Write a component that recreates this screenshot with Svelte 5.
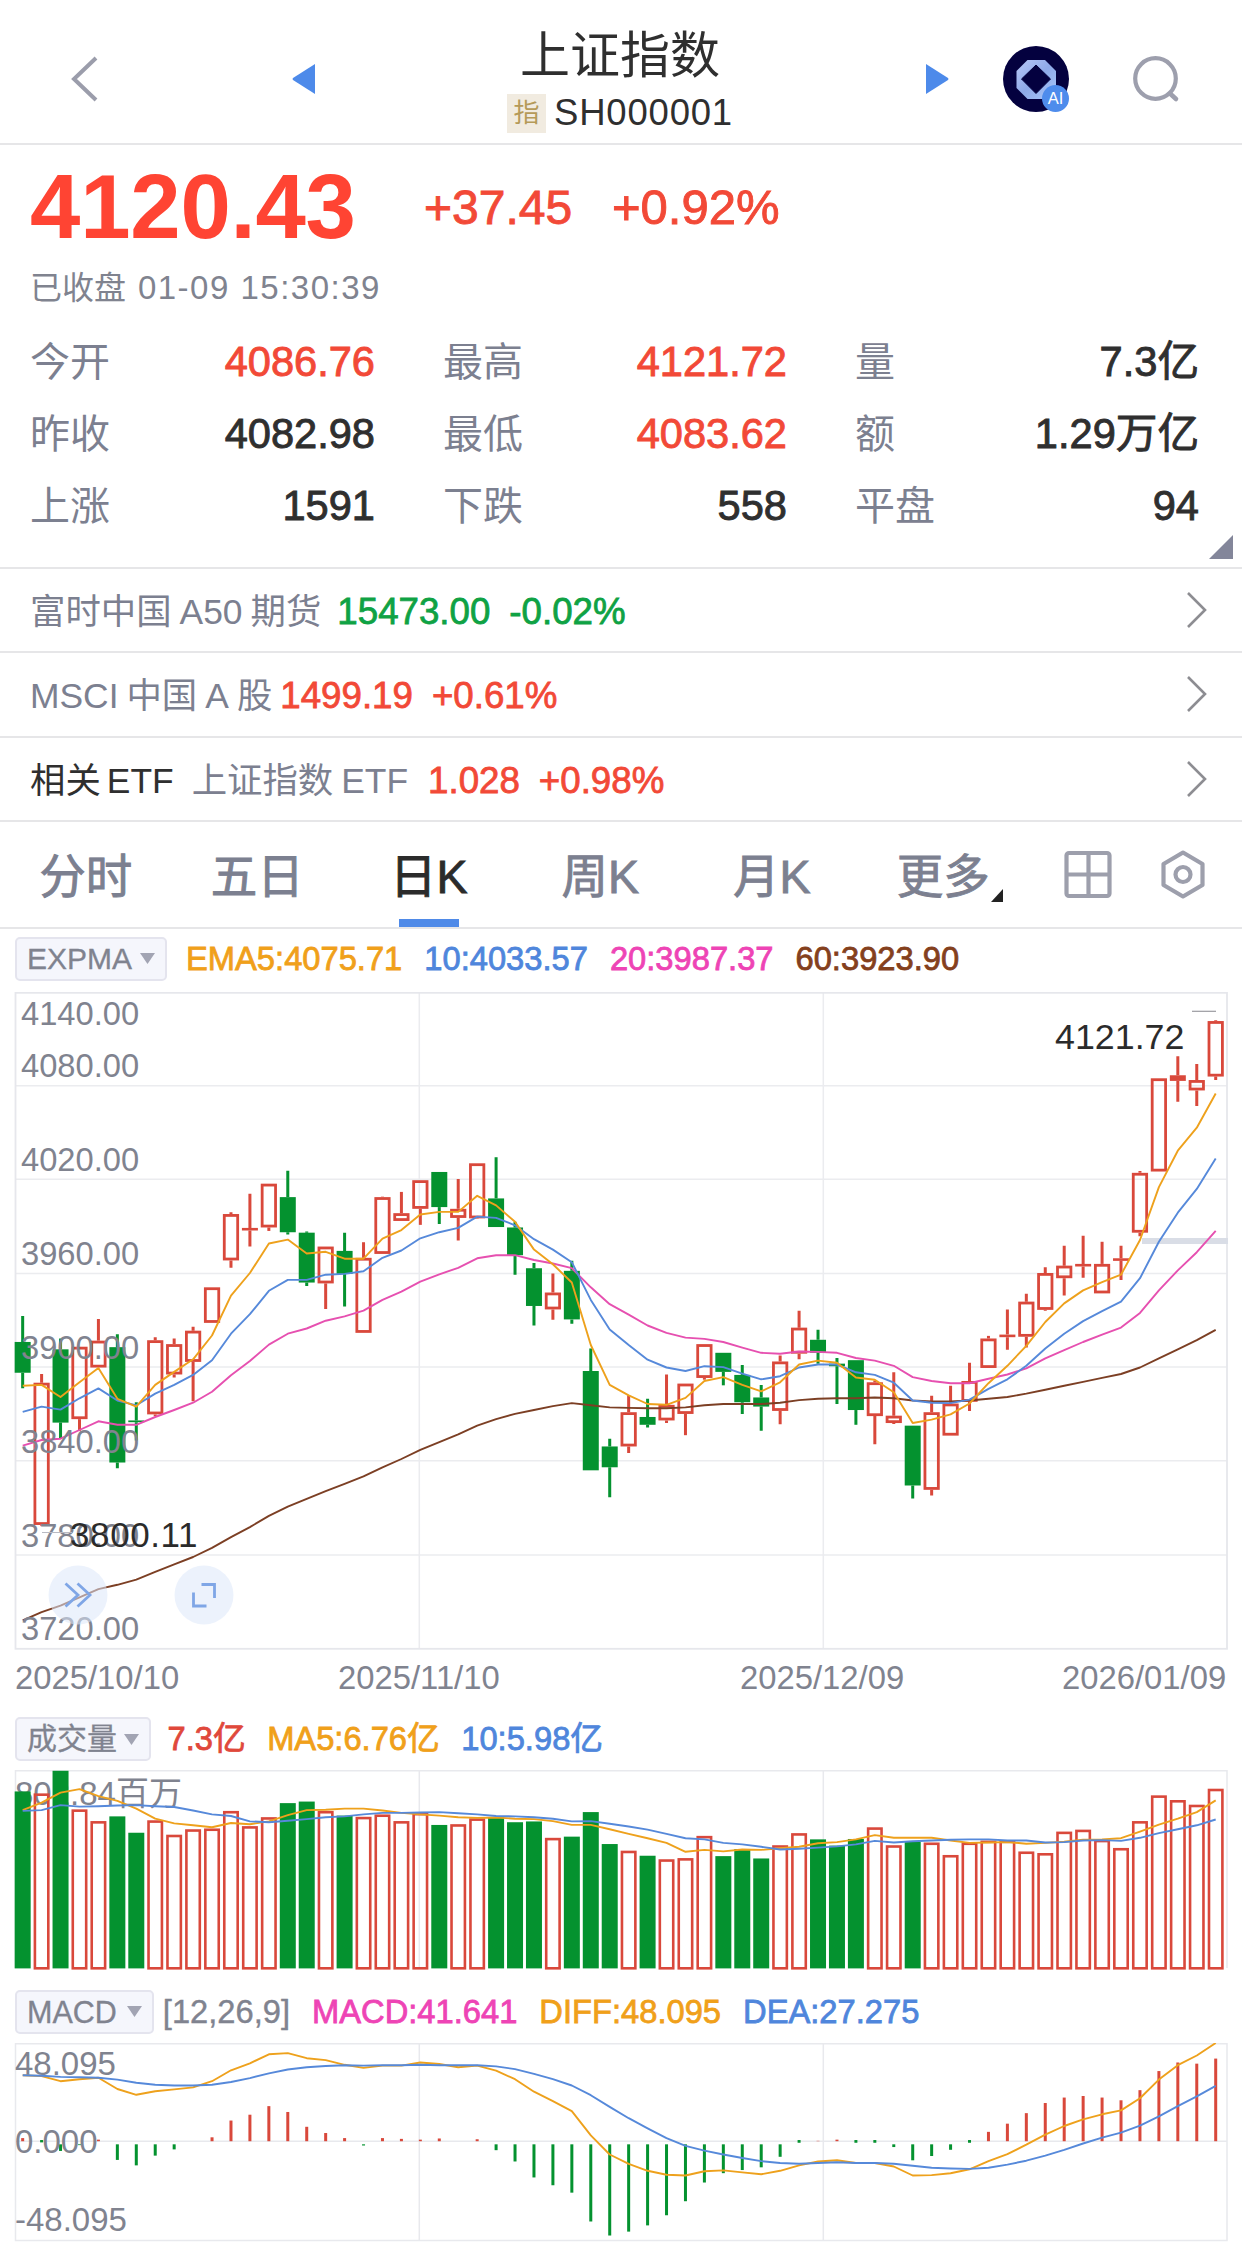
<script>
    const stats = [
        {label: '今开', value: '4086.76', cls: 'up'},
        {label: '最高', value: '4121.72', cls: 'up'},
        {label: '量', value: '7.3亿', cls: ''},
        {label: '昨收', value: '4082.98', cls: ''},
        {label: '最低', value: '4083.62', cls: 'up'},
        {label: '额', value: '1.29万亿', cls: ''},
        {label: '上涨', value: '1591', cls: ''},
        {label: '下跌', value: '558', cls: ''},
        {label: '平盘', value: '94', cls: ''},
    ];

    const related = [
        {lead: '', name: ['富时中国', 'A50', '期货'], price: '15473.00', change: '-0.02%', cls: 'down'},
        {lead: '', name: ['MSCI', '中国', 'A', '股'], price: '1499.19', change: '+0.61%', cls: 'up tight'},
        {lead: '相关', name: ['上证指数', 'ETF'], price: '1.028', change: '+0.98%', cls: 'up wider'},
    ];

    const tabs = ['分时', '五日', '日K', '周K', '月K', '更多'];
    let active = $state('日K');

    const GREEN = '#04922f';
    const RED = '#d9483b';
    const ORANGE = '#eea11c';
    const BLUE = '#5689da';
    const PINK = '#e650b0';
    const BROWN = '#7c3f24';

    // one slot per trading day
    const px = (i) => 22.67 + i * 18.937;
    const priceY = (v) => (v - 28) / 2.306;
    const volY = (v) => (v - 333) / 2.566;
    const macdY = (v) => (v - 1033) / 2.566;

    const line = (values, y) => values.map((v, i) => `${px(i).toFixed(1)},${y(v).toFixed(1)}`).join(' ');

    // [up?, body top, body bottom, wick top, wick bottom]
    const candles = [
        [0, 835, 906, 775, 942], [1, 929, 1257, 909, 1259], [0, 852, 1021, 827, 1059], [1, 846, 1013, 846, 1040],
        [1, 832, 894, 782, 894], [0, 847, 1113, 817, 1126], [0, 1016, 1020, 974, 1062], [1, 831, 1002, 824, 1006],
        [1, 840, 910, 827, 917], [1, 809, 881, 800, 972], [1, 709, 791, 709, 791], [1, 540, 647, 536, 664],
        [1, 572, 578, 493, 615], [1, 470, 571, 470, 579], [0, 501, 582, 440, 587], [0, 583, 698, 580, 706],
        [1, 615, 700, 615, 759], [0, 625, 678, 583, 753], [1, 641, 814, 605, 814], [1, 501, 632, 500, 632],
        [1, 538, 556, 489, 556], [1, 462, 528, 462, 565], [0, 443, 524, 443, 563], [1, 528, 549, 459, 601],
        [1, 423, 550, 423, 551], [0, 504, 570, 409, 570], [0, 571, 635, 558, 680], [0, 665, 752, 653, 797],
        [1, 721, 760, 677, 784], [0, 671, 783, 648, 793], [0, 902, 1131, 850, 1131], [0, 1076, 1124, 1058, 1193],
        [1, 997, 1076, 958, 1091], [0, 1008, 1026, 966, 1032], [1, 980, 1016, 910, 1022], [1, 931, 1001, 931, 1050],
        [1, 840, 918, 840, 922], [0, 860, 904, 860, 935], [0, 911, 974, 888, 1001], [0, 963, 984, 934, 1040],
        [1, 880, 994, 866, 1025], [1, 802, 862, 763, 875], [0, 830, 860, 807, 885], [0, 885, 891, 872, 978],
        [0, 877, 992, 877, 1026], [1, 928, 1006, 924, 1071], [1, 1005, 1022, 905, 1024], [0, 1028, 1166, 1028, 1196],
        [1, 997, 1176, 959, 1189], [1, 977, 1051, 936, 1051], [1, 925, 973, 883, 994], [1, 827, 895, 821, 895],
        [1, 818, 824, 760, 853], [1, 742, 823, 724, 848], [1, 676, 761, 663, 763], [1, 659, 688, 613, 728],
        [1, 655, 661, 590, 687], [1, 655, 723, 604, 723], [1, 642, 648, 613, 692], [1, 445, 583, 441, 591],
        [1, 227, 442, 227, 442], [1, 220, 233, 176, 281], [1, 231, 255, 194, 291], [1, 95, 223, 93, 231],
    ];

    const ema5 = [936, 934, 962, 928, 895, 966, 984, 934, 904, 875, 820, 728, 676, 608, 599, 631, 627, 643, 643, 597, 577, 541, 535, 535, 498, 520, 558, 622, 656, 698, 842, 934, 958, 978, 980, 964, 925, 916, 934, 949, 928, 887, 878, 883, 917, 922, 951, 1022, 1014, 1002, 977, 930, 890, 844, 789, 746, 716, 697, 680, 600, 478, 394, 341, 262];
    const ema10 = [996, 984, 991, 965, 942, 970, 981, 954, 934, 911, 877, 816, 771, 717, 692, 692, 680, 678, 672, 641, 624, 596, 582, 572, 546, 549, 566, 598, 622, 651, 738, 806, 842, 876, 894, 902, 891, 893, 908, 921, 914, 894, 887, 887, 905, 911, 929, 970, 975, 976, 968, 943, 921, 890, 850, 816, 787, 764, 742, 688, 604, 537, 482, 412];
    const ema20 = [1074, 1061, 1058, 1038, 1018, 1026, 1026, 1008, 992, 975, 950, 912, 879, 841, 816, 804, 786, 776, 763, 738, 719, 696, 679, 664, 642, 635, 635, 646, 654, 665, 709, 748, 772, 797, 814, 825, 828, 835, 848, 860, 862, 857, 858, 860, 872, 878, 890, 916, 925, 930, 930, 920, 910, 896, 873, 854, 835, 818, 802, 768, 716, 670, 628, 579];
    const ema60 = [1477, 1458, 1443, 1424, 1405, 1395, 1383, 1365, 1348, 1331, 1310, 1285, 1262, 1236, 1215, 1197, 1179, 1162, 1145, 1124, 1105, 1084, 1066, 1048, 1028, 1013, 1001, 992, 983, 976, 981, 986, 987, 988, 988, 986, 981, 978, 978, 978, 975, 969, 966, 965, 965, 963, 965, 970, 972, 972, 970, 966, 962, 954, 945, 936, 927, 918, 909, 894, 873, 852, 831, 807];

    const volumes = [388, 393, 335, 434, 464, 452, 494, 462, 499, 485, 483, 438, 477, 454, 418, 414, 438, 450, 453, 447, 464, 443, 474, 472, 457, 456, 467, 465, 507, 504, 441, 523, 540, 553, 562, 559, 502, 554, 536, 560, 526, 495, 511, 527, 510, 480, 526, 517, 519, 551, 519, 514, 514, 542, 546, 491, 486, 512, 533, 464, 398, 410, 422, 381];
    const volMa5 = [436, 417, 391, 382, 400, 412, 432, 458, 470, 475, 480, 469, 472, 465, 449, 436, 435, 432, 432, 437, 443, 447, 450, 454, 456, 455, 458, 459, 464, 474, 474, 485, 497, 508, 520, 543, 538, 542, 537, 538, 534, 530, 521, 518, 511, 500, 507, 507, 507, 514, 520, 519, 518, 522, 520, 517, 512, 511, 508, 491, 473, 458, 441, 411];
    const volMa10 = [438, 436, 423, 427, 426, 424, 423, 426, 428, 437, 447, 451, 465, 467, 463, 459, 454, 452, 447, 443, 443, 442, 441, 444, 447, 451, 452, 454, 458, 465, 464, 471, 478, 486, 497, 508, 511, 520, 524, 530, 537, 535, 532, 529, 524, 515, 519, 516, 514, 512, 511, 511, 514, 514, 519, 518, 514, 513, 515, 507, 495, 485, 475, 460];

    const diff = [1116, 1118, 1131, 1126, 1122, 1151, 1166, 1157, 1152, 1147, 1131, 1103, 1085, 1062, 1059, 1072, 1077, 1089, 1097, 1091, 1091, 1083, 1087, 1095, 1091, 1104, 1126, 1158, 1182, 1208, 1270, 1319, 1343, 1361, 1371, 1373, 1362, 1360, 1365, 1370, 1361, 1347, 1337, 1334, 1341, 1341, 1350, 1373, 1372, 1367, 1357, 1336, 1318, 1294, 1268, 1246, 1229, 1216, 1206, 1175, 1127, 1090, 1065, 1033];
    const dea = [1116, 1117, 1120, 1121, 1122, 1127, 1135, 1140, 1142, 1142, 1140, 1133, 1123, 1111, 1101, 1095, 1092, 1090, 1091, 1090, 1090, 1089, 1090, 1090, 1090, 1093, 1100, 1112, 1126, 1142, 1167, 1197, 1226, 1252, 1277, 1297, 1309, 1319, 1328, 1336, 1341, 1343, 1341, 1339, 1341, 1341, 1343, 1348, 1353, 1355, 1356, 1353, 1345, 1335, 1322, 1307, 1291, 1276, 1263, 1245, 1221, 1195, 1170, 1143];
    const macd = [1277, 1288, 1310, 1295, 1281, 1333, 1347, 1322, 1306, 1285, 1275, 1232, 1217, 1195, 1210, 1248, 1264, 1277, 1296, 1277, 1279, 1281, 1278, 1285, 1280, 1308, 1337, 1378, 1398, 1417, 1491, 1527, 1517, 1501, 1475, 1439, 1391, 1367, 1359, 1352, 1325, 1289, 1284, 1281, 1289, 1289, 1300, 1334, 1323, 1307, 1289, 1261, 1240, 1213, 1187, 1173, 1169, 1173, 1180, 1154, 1105, 1083, 1086, 1073];

    const macdBar = (v) => {
        if(v <= 1285) return {top: v, bottom: 1285, color: RED};
        if(v < 1293) return {top: 1282, bottom: v, color: GREEN};
        return {top: 1293, bottom: v, color: GREEN};
    }

    const priceLabels = [
        ['4140.00', 105], ['4080.00', 224], ['4020.00', 441], ['3960.00', 658],
        ['3900.00', 875], ['3840.00', 1092], ['3780.00', 1308], ['3720.00', 1523],
    ];
</script>

{#snippet picker(name)}
    <button class="picker">
        <span>{name}</span>
        <svg width="15" height="11" viewBox="0 0 15 11"><path d="M0 0h15L7.500 11z" fill="#a2a4b3"/></svg>
    </button>
{/snippet}

<div class="app">
    <header class="header">
        <svg class="back" width="30" height="48" viewBox="0 0 30 48"><path d="M26 3L4 24l22 21" fill="none" stroke="#9b9dab" stroke-width="4"/></svg>
        <svg class="prev" width="24" height="32" viewBox="0 0 24 32"><path d="M23 1v30L1 17q-1-1 0-2z" fill="#4d8aea"/></svg>
        <div class="title">
            <div class="name">上证指数</div>
            <div class="code"><span class="badge">指</span><span>SH000001</span></div>
        </div>
        <svg class="next" width="24" height="32" viewBox="0 0 24 32"><path d="M1 1v30l22-14q1-1 0-2z" fill="#4d8aea"/></svg>
        <svg class="logo" width="68" height="68" viewBox="0 0 68 68">
            <defs>
                <linearGradient id="frame" x1="0" y1="0" x2="1" y2="1">
                    <stop offset="0" stop-color="#b9c8f7"/>
                    <stop offset="0.5" stop-color="#8ea9e8"/>
                    <stop offset="1" stop-color="#a9c9fb"/>
                </linearGradient>
            </defs>
            <circle cx="34" cy="34" r="33" fill="#04013f"/>
            <path d="M25.500 15h17.500l11 11v17L43 54H25.500L14.500 43V26z" fill="url(#frame)"/>
            <path d="M34 20l14.500 14L34 48.500 19.500 34z" fill="#04013f" stroke="#04013f" stroke-linejoin="round"/>
            <circle cx="53.500" cy="53.500" r="13.500" fill="#4e8cec"/>
            <text x="53.500" y="59" text-anchor="middle" font-size="16.500" fill="#fff">AI</text>
        </svg>
        <svg class="search" width="48" height="48" viewBox="0 0 48 48">
            <circle cx="23.500" cy="23.500" r="20.300" fill="none" stroke="#9d9fad" stroke-width="4.200"/>
            <path d="M38 38.500l6 5.500" stroke="#9d9fad" stroke-width="4.600" stroke-linecap="round"/>
        </svg>
    </header>

    <section class="quote">
        <div class="priceRow">
            <span class="price">4120.43</span>
            <span class="change">+37.45</span>
            <span class="change percent">+0.92%</span>
        </div>
        <div class="status">已收盘 <span>01-09 15:30:39</span></div>
        <div class="stats">
            {#each stats as s}
                <div class="stat">
                    <span class="label">{s.label}</span>
                    <span class="value {s.cls}">{s.value}</span>
                </div>
            {/each}
        </div>
        <div class="corner"></div>
    </section>

    {#each related as r}
        <div class="related">
            <div class="info">
                {#if r.lead}
                    <span class="lead">{r.lead}<i>ETF</i></span>
                {/if}
                <span class="relName">{#each r.name as part}<i>{part}</i>{/each}</span>
                <span class="relPrice {r.cls}">{r.price}</span>
                <span class="relChange {r.cls}">{r.change}</span>
            </div>
            <svg class="arrow" width="24" height="38" viewBox="0 0 24 38"><path d="M3 2l17 17L3 36" fill="none" stroke="#8d8d92" stroke-width="2.600"/></svg>
        </div>
    {/each}

    <nav class="tabs">
        {#each tabs as tab}
            <button class="tab" class:active={tab == active} onclick={() => active = tab}>
                {tab}
                {#if tab == '更多'}<span class="more"></span>{/if}
            </button>
        {/each}
        <svg class="tool" width="48" height="50" viewBox="0 0 48 50" fill="none" stroke="#9d9fac" stroke-width="4.200">
            <rect x="2.500" y="4" width="43" height="43" rx="2.500"/>
            <path d="M24.500 4v43M2.500 25.500h43"/>
        </svg>
        <svg class="tool gear" width="48" height="50" viewBox="0 0 48 50" fill="none" stroke="#9d9fac" stroke-width="4.200">
            <path d="M24 3.500L43.500 15v21L24 47.500 4.500 36V15z" stroke-linejoin="round"/>
            <circle cx="24" cy="25.500" r="7.500"/>
        </svg>
    </nav>

    <div class="legend first">
        {@render picker('EXPMA')}
        <span class="item orange">EMA5:4075.71</span>
        <span class="item blue">10:4033.57</span>
        <span class="item pink">20:3987.37</span>
        <span class="item brown">60:3923.90</span>
    </div>

    <svg class="chart" width="1242" height="658" viewBox="0 0 1242 658">
        <g fill="none" stroke="#ebecef" stroke-width="1.500">
            {#each [244, 460, 677, 893, 1109, 1326] as g}
                <path d="M15 {priceY(g)}H1227"/>
            {/each}
            <path d="M419.300 0V656M823.300 0V656"/>
            <rect x="15.500" y="0.800" width="1211.500" height="656" stroke="#e6e7ec" stroke-width="1.800"/>
        </g>
        <path d="M1142 249H1228" stroke="#d9dde6" stroke-width="6"/>
        {#each candles as [up, top, bottom, high, low], i}
            {@const color = up ? RED : GREEN}
            <path d="M{px(i)} {priceY(high)}V{priceY(top)}M{px(i)} {priceY(bottom)}V{priceY(low)}" stroke={color} stroke-width="3"/>
            {#if up && bottom - top > 13}
                <rect x={px(i) - 6.7} y={priceY(top) + 1.4} width="13.400" height={priceY(bottom) - priceY(top) - 2.8} fill="none" stroke={color} stroke-width="2.800"/>
            {:else}
                <rect x={px(i) - 8} y={priceY(top)} width="16" height={priceY(bottom) - priceY(top)} fill={color}/>
            {/if}
        {/each}
        <g fill="none" stroke-width="1.900" stroke-linejoin="round">
            <polyline points={line(ema60, priceY)} stroke={BROWN}/>
            <polyline points={line(ema20, priceY)} stroke={PINK}/>
            <polyline points={line(ema10, priceY)} stroke={BLUE}/>
            <polyline points={line(ema5, priceY)} stroke={ORANGE}/>
        </g>
        <g font-size="32.700" fill="#80838f">
            {#each priceLabels as [text, y]}
                <text x="21" y={priceY(y)}>{text}</text>
            {/each}
        </g>
        <path d="M1192 19.300H1216" stroke="#9a9aa0" stroke-width="1.200"/>
        <path d="M42 540.500H72" stroke="#b9bac2" stroke-width="1"/>
        <text x="1055" y="56.500" font-size="35.800" fill="#2b2b2b">4121.72</text>
        <text x="70" y="555" font-size="35" letter-spacing="0.600" fill="#2b2b2b">3800.11</text>
        <g fill="none" stroke="#7fa6e6" stroke-width="2.800">
            <circle cx="78" cy="603" r="29.500" fill="#dce8fa" fill-opacity="0.550" stroke="none"/>
            <path d="M65.500 591.500L78 603l-12.500 11.500M77.500 591.500L90 603l-12.500 11.500"/>
            <circle cx="204" cy="603" r="29.500" fill="#dce8fa" fill-opacity="0.550" stroke="none"/>
            <path d="M201.500 592.500H214.500V606M193.500 600.500V614H206.500"/>
        </g>
    </svg>

    <div class="dates">
        <span>2025/10/10</span>
        <span>2025/11/10</span>
        <span>2025/12/09</span>
        <span>2026/01/09</span>
    </div>

    <div class="legend middle">
        {@render picker('成交量')}
        <span class="item red">7.3亿</span>
        <span class="item orange">MA5:6.76亿</span>
        <span class="item blue">10:5.98亿</span>
    </div>

    <svg class="chart volume" width="1242" height="200" viewBox="0 0 1242 200">
        <path d="M15.500 198V0.800H1227V198M419.300 0V198M823.300 0V198" fill="none" stroke="#e8e9ed" stroke-width="1.500"/>
        <text x="15" y="35" font-size="33" fill="#80838f">802.84百万</text>
        {#each volumes as v, i}
            {#if candles[i][0]}
                <rect x={px(i) - 6.7} y={volY(v) + 1.3} width="13.400" height={197 - volY(v)} fill="none" stroke={RED} stroke-width="2.600"/>
            {:else}
                <rect x={px(i) - 8} y={volY(v)} width="16" height={198.4 - volY(v)} fill={GREEN}/>
            {/if}
        {/each}
        <g fill="none" stroke-width="1.900" stroke-linejoin="round">
            <polyline points={line(volMa5, volY)} stroke={ORANGE}/>
            <polyline points={line(volMa10, volY)} stroke={BLUE}/>
        </g>
    </svg>

    <div class="legend last">
        {@render picker('MACD')}
        <span class="item param">[12,26,9]</span>
        <span class="item pink">MACD:41.641</span>
        <span class="item orange">DIFF:48.095</span>
        <span class="item blue">DEA:27.275</span>
    </div>

    <svg class="chart" width="1242" height="208" viewBox="0 0 1242 208">
        <path d="M15.500 0.800H1227V197.500H15.500zM15 98.300H1227M419.300 0V197M823.300 0V197" fill="none" stroke="#e8e9ed" stroke-width="1.500"/>
        {#each macd as v, i}
            {@const bar = macdBar(v)}
            <rect x={px(i) - 1.5} y={macdY(bar.top)} width="3" height={macdY(bar.bottom) - macdY(bar.top)} fill={bar.color}/>
        {/each}
        <g font-size="33" fill="#80838f">
            <text x="15" y="32">48.095</text>
            <text x="15" y="109.500">0.000</text>
            <text x="15" y="188">-48.095</text>
        </g>
        <g fill="none" stroke-width="1.900" stroke-linejoin="round">
            <polyline points={line(diff, macdY)} stroke={ORANGE}/>
            <polyline points={line(dea, macdY)} stroke={BLUE}/>
        </g>
    </svg>
</div>

<style>
    :global(body) {
        background-color: #fff;
    }

    .app {
        width: 1242px;
        height: 2251px;
        overflow: hidden;
        background-color: #fff;
        color: #2f2f2f;
        font-family: "Liberation Sans", "Noto Sans CJK SC", sans-serif;
    }

    svg {
        display: block;
        flex: none;
    }

    button {
        border: 0;
        padding: 0;
        background: none;
        font: inherit;
        color: inherit;
    }

    i {
        font-style: normal;
    }

    .header {
        display: flex;
        align-items: center;
        box-sizing: border-box;
        height: 145px;
        padding: 14px 62px 0 70px;
        border-bottom: 2px solid #e6e6e8;
    }

    .prev {
        margin-left: 192px;
    }

    .title {
        display: flex;
        flex-direction: column;
        align-items: center;
        flex: 1;
        margin-right: 1px;
    }

    .name {
        font-size: 50px;
        line-height: 60px;
    }

    .code {
        display: flex;
        align-items: center;
        gap: 8px;
        margin-top: 7px;
        margin-bottom: -2px;
        font-size: 36.5px;
        letter-spacing: 0.8px;
        line-height: 40px;
    }

    .badge {
        width: 39px;
        height: 39px;
        background-color: #f1ebe0;
        color: #b59a58;
        font-size: 26px;
        letter-spacing: 0;
        line-height: 38px;
        text-align: center;
    }

    .logo {
        margin-left: 53px;
    }

    .search {
        margin-left: 62px;
    }

    .quote {
        position: relative;
        box-sizing: border-box;
        height: 424px;
        padding: 10px 44px 0 30px;
        border-bottom: 2px solid #e6e6e8;
    }

    .priceRow {
        display: flex;
        align-items: center;
        height: 104px;
        color: #ff4433;
    }

    .price {
        width: 394px;
        font-size: 90.5px;
        font-weight: bold;
        letter-spacing: -0.2px;
        line-height: 104px;
    }

    .change {
        width: 188px;
        color: #f24937;
        font-size: 48px;
        -webkit-text-stroke: 0.9px;
    }

    .change.percent {
        font-size: 49px;
    }

    .status {
        margin-top: 5px;
        color: #80838f;
        font-size: 32px;
        line-height: 48px;
    }

    .status span {
        margin-left: 3px;
        font-size: 33px;
        letter-spacing: 1.5px;
    }

    .stats {
        display: grid;
        grid-template-columns: 345px 344px 344px;
        column-gap: 68px;
        grid-auto-rows: 72px;
        margin-top: 14px;
    }

    .stat {
        display: flex;
        align-items: baseline;
        justify-content: space-between;
        line-height: 72px;
    }

    .label {
        color: #7c8090;
        font-size: 40px;
    }

    .value {
        font-size: 41.6px;
        -webkit-text-stroke: 0.9px;
    }

    .up {
        color: #f24937;
    }

    .down {
        color: #0fa244;
    }

    .corner {
        position: absolute;
        right: 9px;
        bottom: 8px;
        width: 24px;
        height: 24px;
        background-color: #83869a;
        clip-path: polygon(100% 0, 100% 100%, 0 100%);
    }

    .related {
        display: flex;
        align-items: center;
        box-sizing: border-box;
        height: 84.3px;
        padding: 0 33px 0 30px;
        border-bottom: 2px solid #e6e6e8;
        font-size: 35.4px;
        white-space: nowrap;
    }

    .info {
        display: flex;
        align-items: baseline;
        padding-bottom: 3px;
    }

    .lead {
        margin-right: 18px;
    }

    .lead i {
        margin-left: 6px;
    }

    .relName {
        display: flex;
        align-items: baseline;
        gap: 8px;
        color: #7c8090;
    }

    .relPrice {
        margin-left: 16px;
        font-size: 36.7px;
        -webkit-text-stroke: 0.8px;
    }

    .relPrice.tight {
        margin-left: 8px;
    }

    .relPrice.wider {
        margin-left: 20px;
    }

    .relChange {
        margin-left: 19px;
        font-size: 36.7px;
        -webkit-text-stroke: 0.8px;
    }

    .arrow {
        margin-left: auto;
    }

    .tabs {
        display: flex;
        align-items: center;
        box-sizing: border-box;
        height: 107px;
        border-bottom: 2px solid #e6e6e8;
    }

    .tab {
        position: relative;
        width: 171.5px;
        height: 105px;
        padding-bottom: 4px;
        color: #7c8090;
        font-size: 46.5px;
        -webkit-text-stroke: 0.9px;
    }

    .tab.active {
        color: #2b2b2b;
    }

    .tab.active::after {
        content: "";
        position: absolute;
        left: 56px;
        bottom: 0;
        width: 60px;
        height: 8px;
        background-color: #4f8ae8;
    }

    .more {
        position: absolute;
        right: 26px;
        bottom: 25px;
        width: 12px;
        height: 13px;
        background-color: #222;
        clip-path: polygon(100% 0, 100% 100%, 0 100%);
    }

    .tool {
        margin-left: 35px;
    }

    .gear {
        margin-left: 47px;
    }

    .legend {
        display: flex;
        align-items: center;
        height: 44px;
        padding-left: 15px;
        font-size: 32.7px;
        line-height: 40px;
        white-space: nowrap;
    }

    .legend.first {
        margin: 8px 0 11px;
    }

    .legend.middle {
        padding-top: 1px;
        height: 43px;
    }

    .legend.last {
        margin-bottom: 9px;
    }

    .picker {
        display: flex;
        align-items: center;
        gap: 8px;
        box-sizing: border-box;
        height: 44px;
        margin-right: -3px;
        padding: 0 10px;
        border: 2.5px solid #e4e4ee;
        border-radius: 5px;
        background-color: #f5f6fc;
        color: #80838f;
        font-size: 30px;
        -webkit-text-stroke: 0.3px;
    }

    .middle .picker {
        gap: 7px;
        margin-right: -5px;
    }

    .last .picker {
        gap: 10px;
        font-size: 30.5px;
    }

    .item {
        margin-left: 22px;
        -webkit-text-stroke: 0.8px;
    }

    .middle .item {
        margin-left: 21.5px;
    }

    .item.param {
        margin-left: 12px;
        color: #80838f;
        -webkit-text-stroke: 0.4px;
    }

    .red { color: #e0483b; }
    .orange { color: #f0a01a; }
    .blue { color: #4f86dc; }
    .pink { color: #ee44b5; }
    .brown { color: #84401d; }

    .chart {
        font-family: "Liberation Sans", "Noto Sans CJK SC", sans-serif;
    }

    .dates {
        display: grid;
        grid-template-columns: 323px 402px 322px auto;
        height: 67px;
        padding: 8px 0 0 15px;
        box-sizing: border-box;
        color: #80838f;
        font-size: 32.8px;
        line-height: 40px;
    }

    .volume {
        margin: 9px 0 20px;
    }
</style>
